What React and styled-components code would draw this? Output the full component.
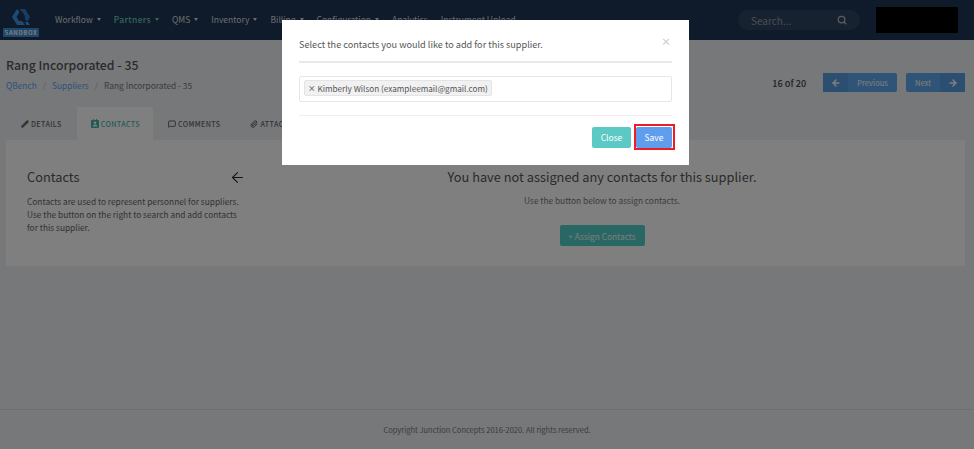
import React from "react";
import styled, { createGlobalStyle } from "styled-components";
import { ArrowLeft, ArrowRight, Search, Pencil, MessageSquare, Paperclip } from "lucide-react";

const GlobalStyle = createGlobalStyle`
  html, body { margin: 0; padding: 0; height: 100%; overflow: hidden; }
  body { font-family: "Noto Sans CJK JP", "Noto Sans", sans-serif; background: #eef0f5; color: #555; }
  * { box-sizing: border-box; }
`;

const navItems = [
  { label: "Workflow", caret: true },
  { label: "Partners", caret: true, active: true },
  { label: "QMS", caret: true },
  { label: "Inventory", caret: true },
  { label: "Billing", caret: true },
  { label: "Configuration", caret: true },
  { label: "Analytics" },
  { label: "Instrument Upload" },
];

const App = () => {
  return (
    <Page>
      <GlobalStyle />
      <Header>
        <Brand>
          <svg width="20" height="18" viewBox="0 0 20 18">
            <path d="M6 0 L1 8 L6 16 L14 16 L11 12 L8 12 L5.500 8 L8.500 3 Z" fill="#3a96e6" />
            <path d="M8 0 L14 0 L19 8 L16 13 L13.500 9 L14.500 8 L11.500 3 Z" fill="#2f7cc8" />
            <path d="M14 13 L17 13 L19 16 L15.500 16 Z" fill="#3a96e6" />
          </svg>
          <SandboxTag>SANDBOX</SandboxTag>
        </Brand>
        <Nav>
          {navItems.map((item) => (
            <NavItem key={item.label} $active={item.active}>
              {item.label}
              {item.caret && <Caret />}
            </NavItem>
          ))}
        </Nav>
        <SearchBox>
          <span>Search...</span>
          <Search size={10} strokeWidth={3} color="#b4b8bd" />
        </SearchBox>
        <BlackBox />
      </Header>

      <TitleRow>
        <div>
          <Title>Rang Incorporated - 35</Title>
          <Crumbs>
            <a>QBench</a>
            <Slash>/</Slash>
            <a>Suppliers</a>
            <Slash>/</Slash>
            <span>Rang Incorporated - 35</span>
          </Crumbs>
        </div>
        <Pager>
          <PagerCount>16 of 20</PagerCount>
          <PagerButton>
            <PagerIcon><ArrowLeft size={10} strokeWidth={3.5} /></PagerIcon>
            <PagerLabel>Previous</PagerLabel>
          </PagerButton>
          <PagerButton>
            <PagerLabel>Next</PagerLabel>
            <PagerIcon><ArrowRight size={10} strokeWidth={3.5} /></PagerIcon>
          </PagerButton>
        </Pager>
      </TitleRow>

      <Tabs>
        <Tab><Pencil size={8} strokeWidth={3} fill="currentColor" /> DETAILS</Tab>
        <Tab $active>
          <svg width="8" height="9" viewBox="0 0 8 9">
            <path
              fill="currentColor"
              fillRule="evenodd"
              d="M1 1 H2 V0 H3 V1 H5 V0 H6 V1 H7 Q8 1 8 2 V8 Q8 9 7 9 H1 Q0 9 0 8 V2 Q0 1 1 1 Z M4 2.500 A1.300 1.300 0 1 0 4 5.100 A1.300 1.300 0 1 0 4 2.500 Z M1.700 7.500 H6.300 Q6.300 5.600 4 5.600 Q1.700 5.600 1.700 7.500 Z"
            />
          </svg>
          CONTACTS
        </Tab>
        <Tab><MessageSquare size={8} strokeWidth={3} /> COMMENTS</Tab>
        <Tab><Paperclip size={8} strokeWidth={3} /> ATTACHMENTS</Tab>
      </Tabs>

      <Panel>
        <Intro>
          <IntroHead>
            <h2>Contacts</h2>
            <ArrowLeft size={17} strokeWidth={1.5} color="#2b2b2b" />
          </IntroHead>
          <p>
            Contacts are used to represent personnel for suppliers.
            <br />
            Use the button on the right to search and add contacts
            <br />
            for this supplier.
          </p>
        </Intro>
        <Empty>
          <h3>You have not assigned any contacts for this supplier.</h3>
          <p>Use the button below to assign contacts.</p>
          <AssignButton>+ Assign Contacts</AssignButton>
        </Empty>
      </Panel>

      <Footer>Copyright Junction Concepts 2016-2020. All rights reserved.</Footer>

      <Overlay />
      <Modal>
        <ModalHead>
          <span>Select the contacts you would like to add for this supplier.</span>
          <CloseX>×</CloseX>
        </ModalHead>
        <ModalBody>
          <TagInput>
            <Chip>
              <b>×</b>
              Kimberly Wilson (exampleemail@gmail.com)
            </Chip>
          </TagInput>
        </ModalBody>
        <ModalFoot>
          <CloseButton>Close</CloseButton>
          <SaveOutline>
            <SaveButton>Save</SaveButton>
          </SaveOutline>
        </ModalFoot>
      </Modal>
    </Page>
  );
};

export default App;

const Page = styled.div`
  height: 100vh;
  display: flex;
  flex-direction: column;
`;
const Header = styled.header`
  height: 40px;
  flex-shrink: 0;
  background: #1f3654;
  display: flex;
  align-items: center;
  padding: 0 16px 0 3px;
`;
const Brand = styled.div`
  width: 36px;
  display: flex;
  flex-direction: column;
  align-items: center;
  padding-top: 5px;
  svg { margin-bottom: 1px; }
`;
const SandboxTag = styled.div`
  width: 36px;
  height: 9px;
  border-radius: 1px;
  background: #3f8fd8;
  color: #f4f7fa;
  font-size: 6px;
  font-weight: 700;
  letter-spacing: 0.6px;
  line-height: 9px;
  text-align: center;
  white-space: nowrap;
`;
const Nav = styled.nav`
  display: flex;
  flex: 1;
  gap: 13px;
  margin-left: 16px;
  margin-top: -2px;
`;
const NavItem = styled.div`
  display: flex;
  align-items: center;
  gap: 4px;
  font-size: 8.500px;
  font-weight: ${({ $active }) => ($active ? 500 : 400)};
  letter-spacing: ${({ $active }) => ($active ? "0.35px" : "0")};
  color: ${({ $active }) => ($active ? "#62cdb6" : "#d6d9dd")};
  white-space: nowrap;
`;
const Caret = styled.i`
  width: 0;
  height: 0;
  margin-top: 1px;
  border-left: 2.5px solid transparent;
  border-right: 2.5px solid transparent;
  border-top: 3px solid currentColor;
`;
const SearchBox = styled.div`
  width: 122px;
  height: 20px;
  margin-right: 16px;
  padding: 0 13px;
  border-radius: 10px;
  background: #2f4563;
  display: flex;
  align-items: center;
  justify-content: space-between;
  color: #9299a3;
  font-size: 10px;
`;
const BlackBox = styled.div`
  width: 82px;
  height: 26px;
  background: #000;
`;
const TitleRow = styled.div`
  display: flex;
  justify-content: space-between;
  align-items: flex-start;
  padding: 15px 9px 0 6px;
  height: 67px;
  flex-shrink: 0;
`;
const Title = styled.h1`
  margin: 0;
  font-size: 12.250px;
  line-height: 20px;
  font-weight: 500;
  color: #555;
`;
const Crumbs = styled.div`
  margin-top: 1px;
  font-size: 8.350px;
  line-height: 18px;
  color: #777;
  a { color: #5aa5f0; }
`;
const Slash = styled.span`
  margin: 0 6px;
  color: #bbb;
`;
const Pager = styled.div`
  display: flex;
  align-items: center;
  margin-top: 18px;
`;
const PagerCount = styled.span`
  margin-right: 8px;
  font-size: 9.200px;
  font-weight: 500;
  color: #444;
`;
const PagerButton = styled.button`
  height: 19px;
  margin-left: 9px;
  padding: 0;
  border: 0;
  border-radius: 2px;
  background: #5fa8ee;
  color: #fff;
  display: flex;
  align-items: stretch;
  font: inherit;
`;
const PagerIcon = styled.span`
  width: 25px;
  display: flex;
  align-items: center;
  justify-content: center;
  background: #589ee2;
`;
const PagerLabel = styled.span`
  padding: 0 9px;
  font-size: 7.600px;
  line-height: 19px;
`;
const Tabs = styled.div`
  display: flex;
  height: 33px;
  flex-shrink: 0;
  padding-left: 6px;
`;
const Tab = styled.div`
  display: flex;
  align-items: center;
  justify-content: center;
  gap: 2px;
  padding: ${({ $active }) => ($active ? "0 13px 0 14px" : "0 15px")};
  font-size: 7.100px;
  font-weight: 500;
  letter-spacing: 0.4px;
  white-space: nowrap;
  color: ${({ $active }) => ($active ? "#45b6a6" : "#666")};
  background: ${({ $active }) => ($active ? "#fff" : "transparent")};
`;
const Panel = styled.section`
  margin: 0 9px 0 6px;
  height: 126px;
  flex-shrink: 0;
  background: #fff;
  display: flex;
`;
const Intro = styled.div`
  width: 219px;
  margin-left: 21px;
  padding-top: 27px;
  flex-shrink: 0;
  p {
    margin: 8px 0 0;
    font-size: 8.330px;
    line-height: 13px;
    color: #666;
    white-space: nowrap;
  }
`;
const IntroHead = styled.div`
  display: flex;
  justify-content: space-between;
  align-items: center;
  h2 {
    margin: 0;
    font-size: 12.800px;
    line-height: 20px;
    font-weight: 400;
    color: #555;
  }
`;
const Empty = styled.div`
  flex: 1;
  padding-top: 27px;
  text-align: center;
  padding-right: 7px;
  h3 {
    margin: 0;
    font-size: 12.800px;
    line-height: 20px;
    font-weight: 400;
    color: #555;
  }
  p {
    margin: 7px 0 0;
    font-size: 8.300px;
    line-height: 13px;
    color: #777;
  }
`;
const AssignButton = styled.button`
  display: block;
  margin: 18px auto 0;
  width: 85px;
  height: 21px;
  padding: 0;
  border: 0;
  border-radius: 2px;
  background: #52cfc8;
  color: #f4fbfa;
  font: inherit;
  font-size: 8.300px;
`;
const Footer = styled.footer`
  margin-top: auto;
  height: 40px;
  flex-shrink: 0;
  border-top: 1px solid #dcdee2;
  display: flex;
  align-items: center;
  justify-content: center;
  font-size: 7.500px;
  color: #777;
`;
const Overlay = styled.div`
  position: fixed;
  inset: 0;
  background: rgba(0, 0, 0, 0.5);
`;
const Modal = styled.div`
  position: fixed;
  left: 282px;
  top: 20px;
  width: 407px;
  height: 145px;
  background: #fff;
  padding: 0 17px;
`;
const ModalHead = styled.div`
  height: 43px;
  display: flex;
  align-items: center;
  justify-content: space-between;
  border-bottom: 2px solid #e9e9e9;
  padding-top: 6px;
  font-size: 9.150px;
  color: #555;
`;
const CloseX = styled.span`
  margin: -5px 0 0;
  padding-right: 1px;
  font-size: 10px;
  font-weight: 700;
  color: #cfcfcf;
`;
const ModalBody = styled.div`
  height: 53px;
  padding-top: 13px;
  border-bottom: 1px solid #eee;
`;
const TagInput = styled.div`
  height: 26px;
  border: 1px solid #e6e6e6;
  border-radius: 2px;
  padding: 3px 4px;
  display: flex;
`;
const Chip = styled.div`
  height: 16px;
  padding: 0 3px;
  background: #f1f1f1;
  border: 1px solid #e4e4e4;
  border-radius: 2px;
  display: flex;
  align-items: center;
  gap: 2px;
  font-size: 8.160px;
  color: #555;
  white-space: nowrap;
  b { font-size: 7.500px; color: #666; }
`;
const ModalFoot = styled.div`
  display: flex;
  justify-content: flex-end;
  align-items: center;
  gap: 3px;
  padding-top: 8px;
`;
const CloseButton = styled.button`
  width: 39px;
  height: 21px;
  padding: 0;
  border: 0;
  border-radius: 2px;
  background: #5bc9c4;
  color: #fff;
  font: inherit;
  font-size: 8.500px;
`;
const SaveOutline = styled.div`
  margin-right: -3px;
  width: 41px;
  height: 26px;
  border: 2px solid #ee1c25;
  display: flex;
  align-items: center;
  justify-content: flex-start;
`;
const SaveButton = styled.button`
  width: 36px;
  height: 21px;
  padding: 0;
  border: 0;
  border-radius: 2px;
  background: #5f9ded;
  color: #fff;
  font: inherit;
  font-size: 8.500px;
`;
